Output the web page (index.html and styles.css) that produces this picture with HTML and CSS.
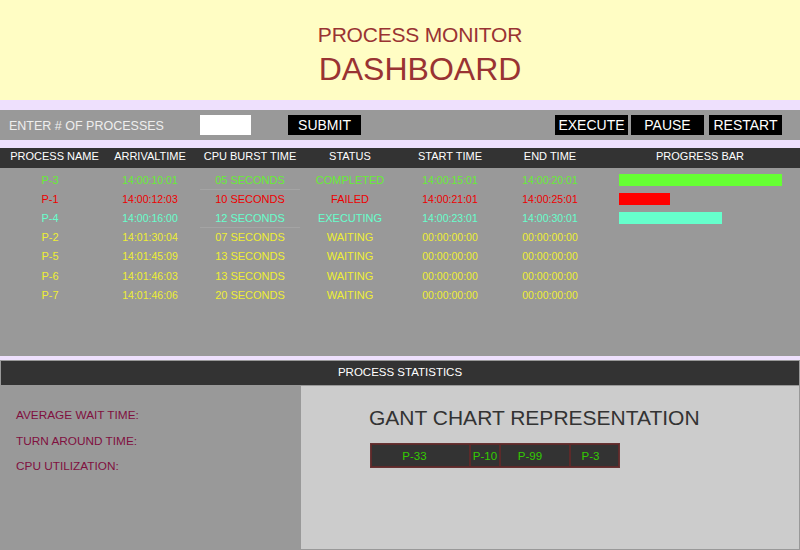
FILE: index.html
```html
<!DOCTYPE html>
<html>
<head>
<meta charset="utf-8">
<title>Process Monitor Dashboard</title>
<link rel="stylesheet" href="styles.css">
</head>
<body>
<header class="hero">
  <h1 class="hero-sub">PROCESS MONITOR</h1>
  <h2 class="hero-title">DASHBOARD</h2>
</header>
<div class="strip strip-top"></div>
<div class="toolbar">
  <span class="tb-label">ENTER # OF PROCESSES</span>
  <input class="tb-input" type="text">
  <button class="btn btn-submit">SUBMIT</button>
  <span class="tb-spacer"></span>
  <button class="btn btn-exec">EXECUTE</button>
  <button class="btn btn-pause">PAUSE</button>
  <button class="btn btn-restart">RESTART</button>
</div>
<div class="strip strip-mid"></div>
<section class="table">
  <div class="thead">
    <div class="th th-first">PROCESS NAME</div>
    <div class="th">ARRIVALTIME</div>
    <div class="th">CPU BURST TIME</div>
    <div class="th">STATUS</div>
    <div class="th">START TIME</div>
    <div class="th">END TIME</div>
    <div class="th">PROGRESS BAR</div>
  </div>
  <div class="tbody">
    <div class="row green">
      <div class="td">P-3</div><div class="td tm">14:00:10:01</div><div class="td ul">05 SECONDS</div><div class="td">COMPLETED</div><div class="td tm">14:00:15:01</div><div class="td tm">14:00:20:01</div>
      <div class="td-bar"><span class="bar" style="width:163px"></span></div>
    </div>
    <div class="row red">
      <div class="td">P-1</div><div class="td tm">14:00:12:03</div><div class="td">10 SECONDS</div><div class="td">FAILED</div><div class="td tm">14:00:21:01</div><div class="td tm">14:00:25:01</div>
      <div class="td-bar"><span class="bar" style="width:51px"></span></div>
    </div>
    <div class="row aqua">
      <div class="td">P-4</div><div class="td tm">14:00:16:00</div><div class="td ul">12 SECONDS</div><div class="td">EXECUTING</div><div class="td tm">14:00:23:01</div><div class="td tm">14:00:30:01</div>
      <div class="td-bar"><span class="bar" style="width:103px"></span></div>
    </div>
    <div class="row yellow">
      <div class="td">P-2</div><div class="td tm">14:01:30:04</div><div class="td">07 SECONDS</div><div class="td">WAITING</div><div class="td tm">00:00:00:00</div><div class="td tm">00:00:00:00</div><div class="td-bar"></div>
    </div>
    <div class="row yellow">
      <div class="td">P-5</div><div class="td tm">14:01:45:09</div><div class="td">13 SECONDS</div><div class="td">WAITING</div><div class="td tm">00:00:00:00</div><div class="td tm">00:00:00:00</div><div class="td-bar"></div>
    </div>
    <div class="row yellow row-tall">
      <div class="td">P-6</div><div class="td tm">14:01:46:03</div><div class="td">13 SECONDS</div><div class="td">WAITING</div><div class="td tm">00:00:00:00</div><div class="td tm">00:00:00:00</div><div class="td-bar"></div>
    </div>
    <div class="row yellow">
      <div class="td">P-7</div><div class="td tm">14:01:46:06</div><div class="td">20 SECONDS</div><div class="td">WAITING</div><div class="td tm">00:00:00:00</div><div class="td tm">00:00:00:00</div><div class="td-bar"></div>
    </div>
  </div>
</section>
<div class="strip strip-low"></div>
<section class="stats">
  <div class="stats-head">PROCESS STATISTICS</div>
  <div class="stats-body">
    <div class="stats-left">
      <p class="stat">AVERAGE WAIT TIME:</p>
      <p class="stat">TURN AROUND TIME:</p>
      <p class="stat">CPU UTILIZATION:</p>
    </div>
    <div class="stats-right">
      <h3 class="gantt-title">GANT CHART REPRESENTATION</h3>
      <div class="gantt">
        <div class="g-cell g1">P-33</div>
        <div class="g-cell g2">P-10</div>
        <div class="g-cell g3">P-99</div>
        <div class="g-cell g4">P-3</div>
      </div>
    </div>
  </div>
</section>
</body>
</html>
```

FILE: styles.css
```css
* { box-sizing: border-box; }
html, body {
  margin: 0;
  padding: 0;
  width: 800px;
  height: 550px;
  overflow: hidden;
  font-family: "Liberation Sans", Arial, sans-serif;
  background: #999999;
}

.hero {
  height: 100px;
  background: #fffdc4;
  padding: 23px 0 0 40px;
  text-align: center;
  color: #993333;
}
.hero-sub {
  margin: 0;
  font-size: 21px;
  line-height: 24px;
  font-weight: normal;
  letter-spacing: -0.2px;
}
.hero-title {
  margin: 4px 0 0;
  font-size: 32px;
  line-height: 36px;
  font-weight: normal;
}

.strip { background: #eee0fd; }
.strip-top { height: 10px; }
.strip-mid { height: 8px; }
.strip-low { height: 4px; }

.toolbar {
  height: 30px;
  background: #999999;
  display: flex;
  align-items: center;
  padding: 0 18px 0 9px;
}
.tb-label {
  width: 191px;
  font-size: 12.5px;
  color: #eeeeee;
  padding-top: 2px;
}
.tb-input {
  width: 51px;
  height: 20px;
  border: none;
  background: #ffffff;
  margin: 0;
  padding: 0;
}
.btn {
  height: 20px;
  width: 73px;
  background: #000000;
  color: #ffffff;
  border: none;
  padding: 0;
  margin: 0;
  font-family: "Liberation Sans", Arial, sans-serif;
  font-size: 14px;
  line-height: 20px;
}
.btn-submit { margin-left: 37px; }
.tb-spacer { flex: 1; }
.btn-pause { margin-left: 3px; }
.btn-restart { margin-left: 5px; }

.table { background: #999999; }
.thead, .row {
  display: grid;
  grid-template-columns: repeat(6, 100px) 200px;
}
.thead {
  height: 20px;
  background: #333333;
  color: #ffffff;
  font-size: 11px;
  line-height: 17px;
}
.th { text-align: center; white-space: nowrap; }
.th-first { padding-left: 9px; }

.tbody {
  height: 188px;
  padding-top: 3px;
}
.row {
  height: 19px;
  font-size: 11px;
  align-items: center;
}
.row-tall { height: 20px; }
.td {
  text-align: center;
  white-space: nowrap;
  height: 19px;
  line-height: 19px;
}
.tm { font-size: 10.5px; }
.ul { border-bottom: 1px solid #a4a4a4; line-height: 19px; }
.td-bar {
  padding-left: 19px;
  display: flex;
  align-items: center;
}
.bar {
  display: block;
  height: 12px;
  margin-top: -2px;
}

.green { color: #66ee33; }
.green .bar { background: #66ff33; }
.red { color: #ee0000; }
.red .bar { background: #ff0000; }
.aqua { color: #66ffcc; }
.aqua .bar { background: #66ffcc; }
.yellow { color: #eeee33; }

.stats {
  height: 190px;
  border: 1px solid #999999;
  background: #999999;
  display: flex;
  flex-direction: column;
}
.stats-head {
  height: 24px;
  background: #333333;
  color: #ffffff;
  font-size: 11.5px;
  line-height: 23px;
  text-align: center;
}
.stats-body {
  flex: 1;
  display: grid;
  grid-template-columns: 300px 1fr;
  padding-top: 1px;
}
.stats-left {
  padding: 17px 0 0 15px;
}
.stat {
  margin: 0;
  font-size: 11.8px;
  line-height: 25.5px;
  color: #80103f;
}
.stats-right {
  background: #cccccc;
  padding: 19px 0 0 68px;
}
.gantt-title {
  margin: 0;
  font-size: 21px;
  line-height: 26px;
  font-weight: normal;
  color: #333333;
  white-space: nowrap;
}
.gantt {
  margin: 12px 0 0 1px;
  width: 250px;
  height: 25px;
  display: flex;
  border: 1px solid #663333;
  background: #333333;
}
.g-cell {
  border: 1px solid #5c2a2a;
  color: #33cc00;
  font-size: 11.5px;
  display: flex;
  align-items: center;
  justify-content: center;
  white-space: nowrap;
}
.g1 { width: 99px; padding-right: 12px; }
.g2 { width: 30px; }
.g3 { width: 70px; padding-right: 10px; }
.g4 { width: 49px; padding-right: 8px; }
```
